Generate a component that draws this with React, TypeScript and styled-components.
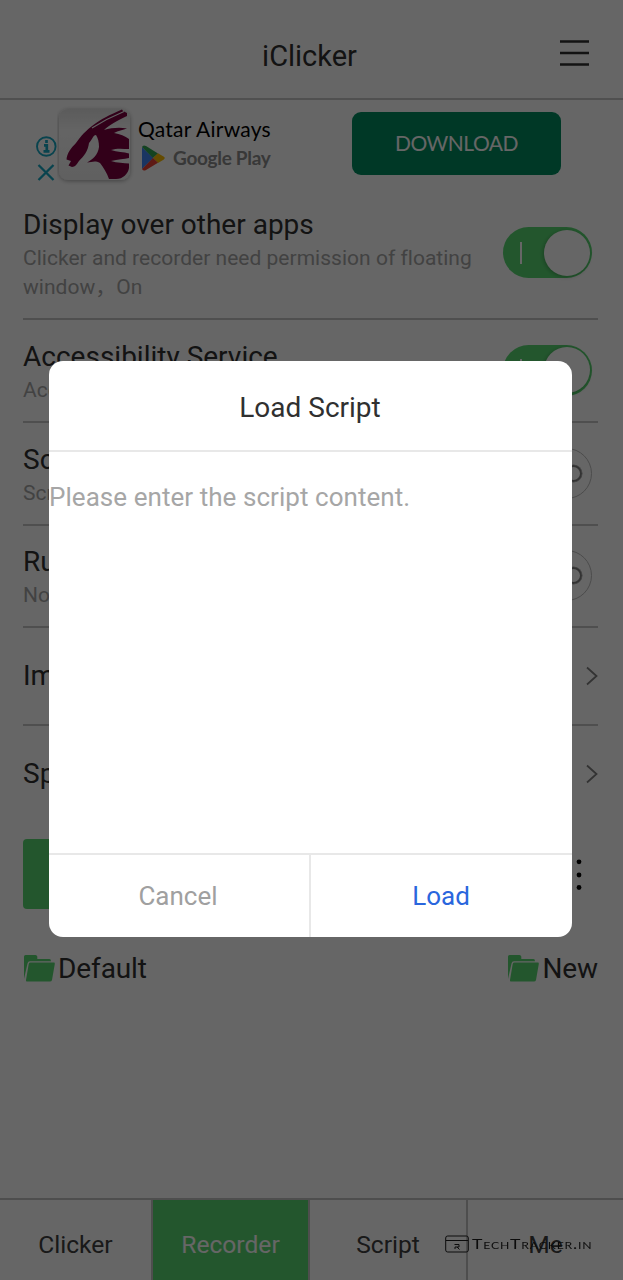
import React from "react";
import styled, { createGlobalStyle, css } from "styled-components";

const GlobalStyle = createGlobalStyle`
  *, *::before, *::after { box-sizing: border-box; }
  html, body, #root { margin: 0; height: 100%; }
  body {
    background: #fff;
    color: #303030;
    font-family: Roboto, "Liberation Sans", "Noto Sans CJK SC", sans-serif;
  }
  button { font: inherit; color: inherit; background: none; border: 0; padding: 0; }
`;

const green = "#59d872";

const Screen = styled.div`
  position: relative;
  width: 623px;
  height: 1280px;
  overflow: hidden;
  display: flex;
  flex-direction: column;
  background: #fff;
`;

const Header = styled.header`
  height: 100px;
  flex: none;
  display: grid;
  grid-template-columns: 64px 1fr 64px;
  align-items: center;
  border-bottom: 2px solid #c9c9c9;
  padding-top: 13px;
`;

const AppTitle = styled.h1`
  grid-column: 2;
  margin: 0 0 0 -4px;
  text-align: center;
  font-size: 29px;
  line-height: 34px;
  font-weight: 400;
`;

const MenuButton = styled.button`
  display: flex;
  height: 30px;
  margin-top: -5px;
`;

const Ad = styled.aside`
  height: 88px;
  flex: none;
  display: flex;
  padding-left: 36px;
`;

const AdMarks = styled.div`
  width: 21px;
  padding-top: 35px;
  display: flex;
  flex-direction: column;
`;

const AdIcon = styled.div`
  width: 78px;
  padding-top: 5px;
`;

const AdText = styled.div`
  width: 217px;
  padding: 14px 0 0 3px;
  font-family: Lato, sans-serif;
`;

const Advertiser = styled.div`
  font-size: 21px;
  line-height: 29px;
  color: #000;
  letter-spacing: 0.24px;
  white-space: nowrap;
`;

const Store = styled.div`
  display: flex;
  align-items: center;
  gap: 8px;
  padding: 1px 0 0 3px;
  font-size: 19px;
  line-height: 28px;
  font-weight: 700;
  color: #8c8c8c;
  letter-spacing: -0.3px;
`;

const Download = styled.button`
  width: 209px;
  height: 63px;
  margin-top: 12px;
  padding-bottom: 2px;
  border-radius: 9px;
  background: #008c60;
  color: #fff;
  font-family: Lato, sans-serif;
  font-size: 21px;
  letter-spacing: -0.5px;
`;

const Settings = styled.main`
  flex: 1;
  padding: 0 25px 0 23px;
`;

const Row = styled.section<{ $height: number; $last?: boolean }>`
  height: ${(p) => p.$height}px;
  display: flex;
  align-items: center;
  justify-content: space-between;
  border-bottom: ${(p) => (p.$last ? "0" : "2px solid #c6c6c6")};
`;

const RowText = styled.div`
  width: 465px;
  padding-top: 4px;
`;

const RowTitle = styled.div`
  font-size: 28px;
  line-height: 34px;
  white-space: nowrap;
`;

const RowNote = styled.div`
  padding-top: 2px;
  font-size: 21px;
  line-height: 29.5px;
  letter-spacing: 0.02px;
  color: #a6a6a6;
`;

const Switch = styled.span<{ $on?: boolean }>`
  width: 89px;
  height: 51px;
  margin: 0 6px 1px 0;
  flex: none;
  display: flex;
  align-items: center;
  justify-content: space-between;
  border-radius: 26px;
  ${(p) =>
    p.$on
      ? css`
          background: ${green};
          padding: 0 2px 0 17px;
        `
      : css`
          border: 1.5px solid #bdbdbd;
          padding: 0 9px 0 0;
          flex-direction: row-reverse;
        `}
`;

const OnMark = styled.i`
  width: 2px;
  height: 22px;
  background: #fff;
`;

const OffMark = styled.i`
  width: 17px;
  height: 17px;
  border: 2.5px solid #808080;
  border-radius: 50%;
  box-shadow: 0 0 0 0.5px #a0a0a0;
`;

const Knob = styled.i`
  width: 46px;
  height: 46px;
  border-radius: 50%;
  background: #fff;
  box-shadow: -1px 1px 4px rgba(0, 0, 0, 0.25);
`;

const Actions = styled.div`
  display: flex;
  align-items: center;
  gap: 26px;
  margin-top: 18px;
`;

const RecordButton = styled.button`
  width: 518px;
  height: 70px;
  border-radius: 4px;
  background: ${green};
  color: #fff;
  font-size: 28px;
`;

const Folders = styled.div`
  display: flex;
  justify-content: space-between;
  margin-top: 40px;
  padding: 0 0 0 1px;
`;

const Folder = styled.div`
  display: flex;
  align-items: center;
  gap: 3px;
  font-size: 28px;
  line-height: 37px;
  letter-spacing: -0.1px;
  span { padding-top: 1px; }
`;

const Tabs = styled.nav`
  height: 82px;
  flex: none;
  display: flex;
  border-top: 2px solid #c4c4c4;
`;

const Tab = styled.div<{ $active?: boolean; $width: number }>`
  width: ${(p) => p.$width}px;
  padding-top: 8px;
  display: flex;
  align-items: center;
  justify-content: center;
  font-size: 24.6px;
  border-right: 2px solid #c4c4c4;
  background: ${(p) => (p.$active ? green : "transparent")};
  color: ${(p) => (p.$active ? "#fff" : "#404040")};
  &:last-child { border-right: 0; }
`;

const Backdrop = styled.div`
  position: absolute;
  inset: 0;
  padding: 361px 51px 343px 49px;
  background: rgba(0, 0, 0, 0.6);
`;

const Dialog = styled.div`
  height: 576px;
  border-radius: 14px;
  overflow: hidden;
  background: #fff;
  display: flex;
  flex-direction: column;
`;

const DialogTitle = styled.h2`
  margin: 0;
  height: 91px;
  flex: none;
  display: flex;
  align-items: center;
  justify-content: center;
  border-bottom: 2px solid #e8e8e8;
  font-size: 28px;
  font-weight: 400;
  padding: 3px 1px 0 0;
`;

const ScriptInput = styled.div`
  flex: 1;
  padding-top: 28px;
  font-size: 26px;
  line-height: 34px;
  letter-spacing: 0.05px;
  color: #a6a6a6;
  white-space: nowrap;
`;

const DialogActions = styled.div`
  height: 84px;
  flex: none;
  display: flex;
  border-top: 2px solid #e8e8e8;
`;

const DialogButton = styled.button<{ $primary?: boolean }>`
  flex: 0 0 262px;
  padding: 0 2px 1px 0;
  font-size: 26px;
  color: ${(p) => (p.$primary ? "#2a66dd" : "#a0a0a0")};
  &:first-child { border-right: 2px solid #e8e8e8; }
`;

const Watermark = styled.div`
  position: absolute;
  left: 445px;
  top: 1234px;
  display: flex;
  align-items: center;
  gap: 3px;
  color: #0c0c0c;
`;

const WatermarkText = styled.span`
  font-family: Lato, sans-serif;
  font-weight: 400;
  font-size: 13px;
  line-height: 20px;
  font-variant: small-caps;
  letter-spacing: 0.6px;
  transform: scaleX(1.36);
  transform-origin: left center;
  white-space: nowrap;
`;

const Chevron = () => (
  <svg width="12" height="20" viewBox="0 0 12 20" fill="none" stroke="#808080" strokeWidth="1.8">
    <path d="M1 1.5 10.5 10 1 18.5" />
  </svg>
);

const FolderIcon = () => (
  <svg width="31" height="27" viewBox="0 0 31 27" fill={green}>
    <path d="M0 24V1.5Q0 0 1.5 0H11.5Q13 0 13.3 1.5V4H25.5Q27 4 27 6.3H6Q4 6.3 3.5 8.5Z" />
    <path d="M6.5 7.6H30Q31 7.6 30.8 9L28 25Q27.6 26.6 26 26.6H3Q1.6 26.6 2 25L4.7 9Q5 7.6 6.5 7.6Z" />
  </svg>
);

const AirlineIcon = () => (
  <svg width="78" height="80" viewBox="0 0 78 80">
    <defs>
      <linearGradient id="tile" x2="0" y2="1">
        <stop stopColor="#e4e4e4" />
        <stop offset=".3" stopColor="#fafafa" />
        <stop offset="1" stopColor="#f0f0f0" />
      </linearGradient>
      <filter id="soft" x="-20%" y="-20%" width="140%" height="140%">
        <feDropShadow dx="0" dy="1" stdDeviation="2" floodOpacity=".35" />
      </filter>
    </defs>
    <rect x="2" y="4" width="71" height="71" rx="9" fill="url(#tile)" filter="url(#soft)" />
    <path
      fill="#7d0040"
      d="M9.5 54.5C10 48 14 43 19 38C29 24 40 15 65 4.5L66 6L70 8V11C60 16 52 20 47 25C54 23 62 22 70 23.5C66 25 61 25.5 57 28C63 29 68 31 72 34V44C66 44 60 43 54 45C60 47 67 47 72 48.5V53C67 54 61 54.5 54 56C60 58 67 58 72 58.5V63C71 69 66 74 59 74H52C50 68 46 62 43 58C38 55 35 57 30 57.5C36 54 41 50 42 42C42 37 41 33 39 30C36 30 35 35 32 38C31 46 27 51 22 56C20 59 18 62 15 62L11.5 60.5L14 56Z"
    />
    <path d="M35 23C46 16 56 11 67 6.5" fill="none" stroke="#f3f3f3" strokeWidth="1.2" />
  </svg>
);

const PlayIcon = () => (
  <svg width="24" height="26" viewBox="0 0 24 26">
    <path d="M1 2V24L12.5 13Z" fill="#4285f4" />
    <path d="M1 2Q2-.5 5 1L17 8.5 12 13Z" fill="#34a853" />
    <path d="M17 8.3 22.5 11.5Q25 13 22.5 14.8L17 18 12 13Z" fill="#fbbc04" />
    <path d="M1 24Q2.5 26.5 5 25L17 17.8 12 13Z" fill="#ea4335" />
  </svg>
);

export default function App() {
  return (
    <>
      <GlobalStyle />
      <Screen>
        <Header>
          <AppTitle>iClicker</AppTitle>
          <MenuButton aria-label="Menu">
            <svg width="30" height="30" viewBox="0 0 30 30" stroke="#303030" strokeWidth="2.7">
              <path d="M1 3.5H30M1 15H30M1 26.5H30" />
            </svg>
          </MenuButton>
        </Header>

        <Ad>
          <AdMarks>
            <svg width="21" height="48" viewBox="0 0 21 48" fill="none" stroke="#18a9c4" strokeWidth="1.9">
              <circle cx="10.3" cy="11.5" r="9.3" />
              <path d="M10.5 5V8M8 10.4H10.8V16.3M7.5 16.4H13.5" strokeWidth="2.7" />
              <path d="M2.5 30 17.5 45M17.5 30 2.5 45" strokeWidth="2.3" />
            </svg>
          </AdMarks>
          <AdIcon><AirlineIcon /></AdIcon>
          <AdText>
            <Advertiser>Qatar Airways</Advertiser>
            <Store><PlayIcon />Google Play</Store>
          </AdText>
          <Download>DOWNLOAD</Download>
        </Ad>

        <Settings>
          <Row $height={132}>
            <RowText>
              <RowTitle>Display over other apps</RowTitle>
              <RowNote>Clicker and recorder need permission of floating window，On</RowNote>
            </RowText>
            <Switch $on><OnMark /><Knob /></Switch>
          </Row>
          <Row $height={103}>
            <RowText>
              <RowTitle>Accessibility Service</RowTitle>
              <RowNote>Accessibility Service，On</RowNote>
            </RowText>
            <Switch $on><OnMark /><Knob /></Switch>
          </Row>
          <Row $height={103}>
            <RowText>
              <RowTitle>Screen</RowTitle>
              <RowNote>Screen</RowNote>
            </RowText>
            <Switch><OffMark /></Switch>
          </Row>
          <Row $height={102}>
            <RowText>
              <RowTitle>Run</RowTitle>
              <RowNote>No</RowNote>
            </RowText>
            <Switch><OffMark /></Switch>
          </Row>
          <Row $height={98}>
            <RowTitle>Import</RowTitle>
            <Chevron />
          </Row>
          <Row $height={95} $last>
            <RowTitle>Speed</RowTitle>
            <Chevron />
          </Row>
          <Actions>
            <RecordButton>Record</RecordButton>
            <svg width="24" height="32" viewBox="0 0 24 32" fill="#000">
              <circle cx="12" cy="3.8" r="2.4" />
              <circle cx="12" cy="17" r="2.4" />
              <circle cx="12" cy="29.5" r="2.4" />
            </svg>
          </Actions>
          <Folders>
            <Folder><FolderIcon /><span>Default</span></Folder>
            <Folder><FolderIcon /><span>New</span></Folder>
          </Folders>
        </Settings>

        <Tabs>
          <Tab $width={153}>Clicker</Tab>
          <Tab $width={157} $active>Recorder</Tab>
          <Tab $width={158}>Script</Tab>
          <Tab $width={155}>Me</Tab>
        </Tabs>

        <Backdrop>
          <Dialog role="dialog">
            <DialogTitle>Load Script</DialogTitle>
            <ScriptInput>Please enter the script content.</ScriptInput>
            <DialogActions>
              <DialogButton>Cancel</DialogButton>
              <DialogButton $primary>Load</DialogButton>
            </DialogActions>
          </Dialog>
        </Backdrop>

        <Watermark>
          <svg width="24" height="18" viewBox="0 0 24 18" fill="none" stroke="#0c0c0c">
            <rect x=".7" y="1" width="22.6" height="16" rx="2" />
            <path d="M1 5.5H23M9.5 9.5H14V12H10V14M12 12 14.5 14.5" />
          </svg>
          <WatermarkText>TechTracker.in</WatermarkText>
        </Watermark>
      </Screen>
    </>
  );
}
